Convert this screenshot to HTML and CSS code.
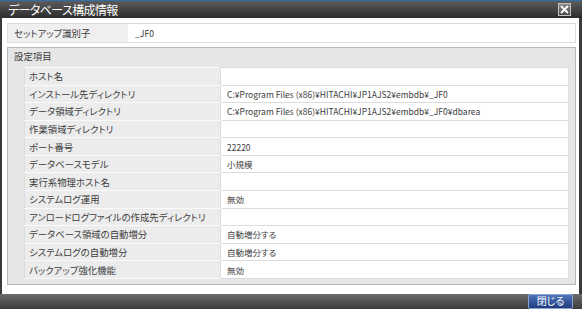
FILE: index.html
```html
<!DOCTYPE html>
<html>
  <head>
    <meta charset="UTF-8" />
    <title>データベース構成情報</title>
    <link rel="stylesheet" href="styles.css">
  </head>
  <body>
    <div class="dialog">
      <div class="titlebar">
        <span class="title">データベース構成情報</span>
        <span class="close-btn">
          <svg width="9" height="9" viewBox="0 0 9 9"><path d="M1 1L8 8M8 1L1 8" stroke="#fff" stroke-width="1.8"/></svg>
        </span>
      </div>
      <div class="content">
        <div class="setup-row">
          <div class="setup-label">セットアップ識別子</div>
          <div class="setup-value">_JF0</div>
        </div>
        <div class="settings">
          <div class="legend">設定項目</div>
          <table class="items">
            <tr><td class="label">ホスト名</td><td class="value"></td></tr>
            <tr><td class="label">インストール先ディレクトリ</td><td class="value">C:¥Program Files (x86)¥HITACHI¥JP1AJS2¥embdb¥_JF0</td></tr>
            <tr><td class="label">データ領域ディレクトリ</td><td class="value">C:¥Program Files (x86)¥HITACHI¥JP1AJS2¥embdb¥_JF0¥dbarea</td></tr>
            <tr><td class="label">作業領域ディレクトリ</td><td class="value"></td></tr>
            <tr><td class="label">ポート番号</td><td class="value">22220</td></tr>
            <tr><td class="label">データベースモデル</td><td class="value">小規模</td></tr>
            <tr><td class="label">実行系物理ホスト名</td><td class="value"></td></tr>
            <tr><td class="label">システムログ運用</td><td class="value">無効</td></tr>
            <tr><td class="label">アンロードログファイルの作成先ディレクトリ</td><td class="value"></td></tr>
            <tr><td class="label">データベース領域の自動増分</td><td class="value">自動増分する</td></tr>
            <tr><td class="label">システムログの自動増分</td><td class="value">自動増分する</td></tr>
            <tr><td class="label">バックアップ強化機能</td><td class="value">無効</td></tr>
          </table>
        </div>
      </div>
      <div class="footer">
        <button class="close-action">閉じる</button>
      </div>
    </div>
  </body>
</html>
```

FILE: styles.css
```css
body {
  margin: 0;
  background: #333;
  font-family: "Noto Sans CJK JP", "Noto Sans", sans-serif;
  font-feature-settings: "palt";
  font-size: 9.4px;
  color: #3c3c3c;
}

.dialog {
  width: 582px;
  height: 309px;
  display: flex;
  flex-direction: column;
  background: #3a3a3a;
}

.titlebar {
  height: 23px;
  border-top: 1px solid #2f6ea8;
  background: linear-gradient(#5c5c5c, #2c2c2c);
  display: flex;
  align-items: center;
  justify-content: space-between;
  padding: 0 11px 0 8px;
}
.title {
  color: #fff;
  font-size: 12px;
  letter-spacing: -0.6px;
}
.close-btn {
  width: 11px;
  height: 11px;
  border: 1px solid #c4c4c4;
  background: linear-gradient(#8a8a8a, #4a4a4a);
  display: flex;
  align-items: center;
  justify-content: center;
}

.content {
  flex: 1;
  background: #fff;
  margin: 0 3px 0 2px;
  padding: 5px 3px 9px 5px;
  display: flex;
  flex-direction: column;
  gap: 4px;
}

.setup-row {
  height: 18px;
  border: 1px solid #ddd;
  display: flex;
  align-items: center;
}
.setup-label {
  width: 114px;
  height: 100%;
  background: #efefef;
  padding-left: 6px;
  display: flex;
  align-items: center;
}
.setup-value {
  padding-left: 7px;
  font-size: 8.6px;
}

.settings {
  flex: 1;
  border: 1px solid #b8b8b8;
  background: #e6e6e6;
  padding: 0 6px 5px 16px;
  display: flex;
  flex-direction: column;
}
.legend {
  height: 19px;
  line-height: 17px;
  margin-left: -10px;
}

.items {
  border-collapse: collapse;
  width: 100%;
}
.items td {
  height: 16.58px;
  padding: 0 0 0 4px;
  border: 1px solid #dcdcdc;
  line-height: 14px;
  white-space: nowrap;
}
.items .label {
  width: 191px;
  background: #ececec;
  border-color: #fafafa #dcdcdc;
}
.items .value {
  background: #fff;
  padding-left: 6px;
  font-size: 8.5px;
}

.footer {
  height: 22px;
  background: linear-gradient(#6c6c6c, #3c3c3c);
  display: flex;
  align-items: center;
  justify-content: flex-end;
  padding-right: 9px;
}
.close-action {
  width: 45px;
  height: 15px;
  border: 1px solid #8aa3d0;
  border-radius: 2px;
  background: linear-gradient(#4f74b8, #1f3c80);
  color: #fff;
  font-family: inherit;
  font-feature-settings: "palt";
  font-size: 10px;
  padding: 0;
  line-height: 12px;
}
```
